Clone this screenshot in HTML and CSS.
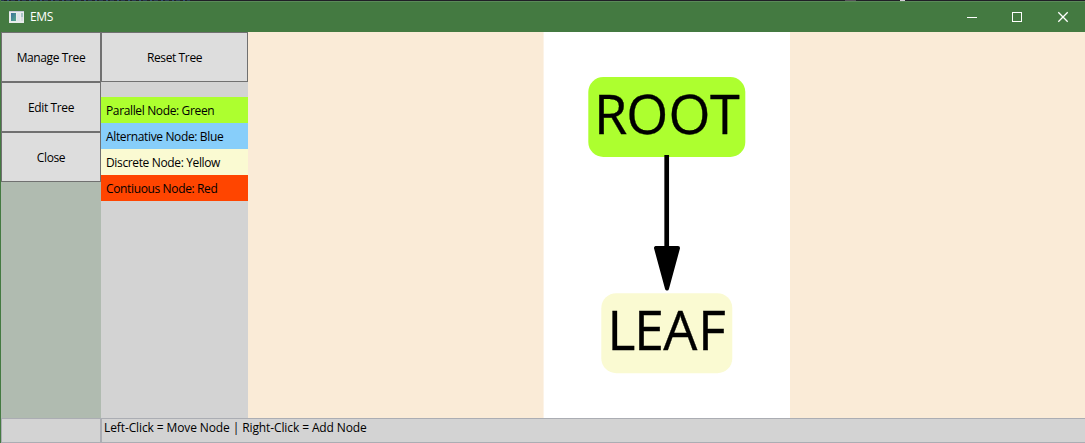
FILE: index.html
```html
<!DOCTYPE html>
<html lang="en">
<head>
<meta charset="utf-8">
<title>EMS</title>
<link rel="stylesheet" href="styles.css">
</head>
<body>
<div class="window">
  <div class="backdrop"></div>
  <header class="titlebar">
    <svg class="app-icon" width="15" height="12" viewBox="0 0 15 12">
      <defs><linearGradient id="pane" x1="0" y1="0" x2="1" y2="1"><stop offset="0" stop-color="#3c6f9c"/><stop offset="1" stop-color="#55a98c"/></linearGradient></defs>
      <rect width="15" height="12" fill="#e9ecec"/>
      <rect width="15" height="1" fill="#c3c6d6"/>
      <rect x="2" y="2" width="5" height="8" fill="url(#pane)"/>
      <rect x="8" y="2" width="3" height="8" fill="#dfe4ea"/>
      <rect x="12" y="2" width="2" height="4" fill="#a9c3c6"/>
      <rect x="12" y="6" width="2" height="4" fill="#d8dde0"/>
    </svg>
    <span class="title">EMS</span>
    <div class="controls">
      <svg width="46" height="31" viewBox="0 0 46 31"><path class="glyph crisp" d="M18 15.500h10"/></svg>
      <svg width="46" height="31" viewBox="0 0 46 31"><path class="glyph crisp" d="M17.500 10.500h9v9h-9z"/></svg>
      <svg width="46" height="31" viewBox="0 0 46 31"><path class="glyph cross" d="M17.300 10.300l9.400 9.400M26.700 10.300l-9.400 9.400"/></svg>
    </div>
  </header>
  <main class="main">
    <nav class="menu">
      <button class="btn">Manage Tree</button>
      <button class="btn">Edit Tree</button>
      <button class="btn">Close</button>
    </nav>
    <aside class="panel">
      <button class="btn">Reset Tree</button>
      <ul class="legend">
        <li class="parallel">Parallel Node: Green</li>
        <li class="alternative">Alternative Node: Blue</li>
        <li class="discrete">Discrete Node: Yellow</li>
        <li class="continuous">Contiuous Node: Red</li>
      </ul>
    </aside>
    <section class="viewer">
      <svg class="graph" width="247" height="386" viewBox="543 32 247 386">
        <rect x="543" y="32" width=".6" height="386" fill="#faebd7"/>
        <rect x="588.300" y="77" width="157" height="80" rx="15" fill="#adff2f"/>
        <text class="node" y="134.100" x="594 626.300 668.500 710">ROOT</text>
        <path d="M666.700 155V250" stroke="#000" stroke-width="4.700"/>
        <path d="M656 248H678L667 288.500z" stroke="#000" stroke-width="4" stroke-linejoin="round"/>
        <rect x="601.300" y="293.200" width="131" height="80" rx="15" fill="#fafad2"/>
        <text class="node" y="350.100" x="607.300 634 663.300 698">LEAF</text>
      </svg>
    </section>
  </main>
  <footer class="status">
    <div class="cell"></div>
    <div class="cell message">Left-Click = Move Node | Right-Click = Add Node</div>
  </footer>
</div>
</body>
</html>
```
FILE: styles.css
```css
* { box-sizing: border-box; }
body { margin: 0; font: 12px/16px "Open Sans", "Noto Sans", sans-serif; color: #000; }
.window { width: 1085px; height: 443px; display: flex; flex-direction: column; border-left: 1px solid #447a41; overflow: hidden; }
/* sliver of the editor visible above the window */
.backdrop { height: 1px; flex: none; margin-left: -1px; background: linear-gradient(#555158, #555158) 845px 0 / 11px 1px no-repeat, linear-gradient(#d5d0d8, #d5d0d8) 900px 0 / 5px 1px no-repeat, repeating-linear-gradient(90deg, #26384f 0 4px, #201f26 4px 7px, #2b4a70 7px 9px, #201f26 9px 11px) 0 0 / 190px 1px no-repeat, #201f26; }
.titlebar { height: 31px; flex: none; display: flex; align-items: center; background: #447a41; border-top: 1px solid #5b8a59; color: #fff; padding-left: 8px; }
.app-icon { margin-top: -1px; }
.title { margin-left: 6px; letter-spacing: -.3px; }
.controls { margin-left: auto; display: flex; margin-right: -2px; }
.glyph { fill: none; stroke: #fff; stroke-width: 1; }
.cross { stroke-width: 1.3; }
.crisp { shape-rendering: crispEdges; }
.main { height: 386px; flex: none; display: flex; }
.menu { width: 100px; flex: none; background: #b0bbb0; }
.panel { width: 147px; flex: none; background: #d3d3d3; }
.btn { display: block; width: 100%; height: 50px; margin: 0; padding: 2px 0 0; border: 1px solid #707070; border-radius: 0; background: #ddd; font: inherit; color: #000; letter-spacing: -.38px; }
.legend { margin: 15px 0 0; padding: 0; list-style: none; }
.legend li { height: 26px; padding: 6px 5px 0; white-space: nowrap; letter-spacing: -.36px; }
.parallel { background: #adff2f; }
.alternative { background: #87cefa; }
.discrete { background: #fafad2; }
.continuous { background: #ff4500; }
.viewer { flex: 1; display: flex; justify-content: center; background: #faebd7; }
.graph { background: #fff; margin-left: -1px; }
.node { font-family: "Open Sans", "Noto Sans", sans-serif; font-size: 54px; stroke: #000; stroke-width: .3px; }
.status { height: 25px; flex: none; display: flex; background: #d3d3d3; }
.cell { width: 100px; border: 1px solid #abadb3; }
.message { flex: 1; border-right: 0; padding: 1px 2px; white-space: nowrap; letter-spacing: -.11px; }
```
